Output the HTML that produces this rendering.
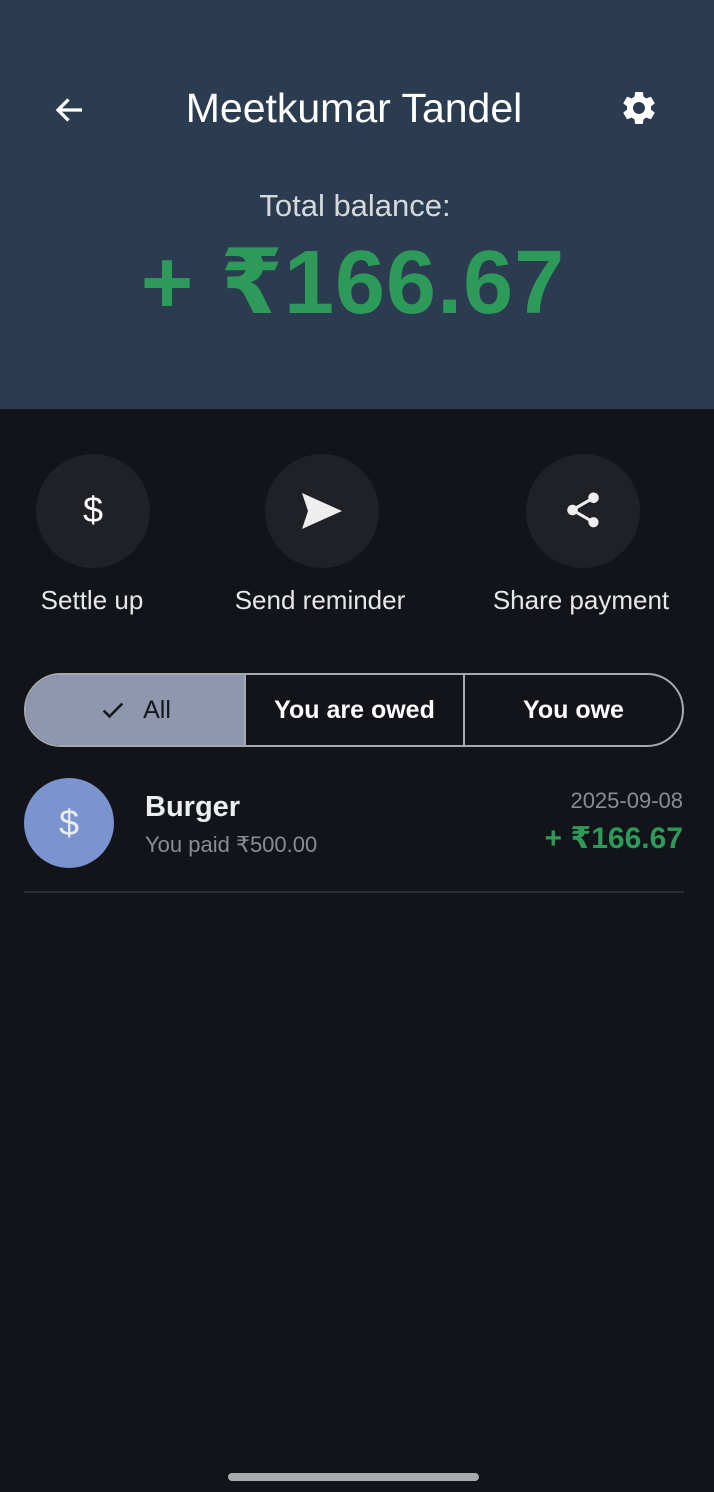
<!DOCTYPE html>
<html><head><meta charset="utf-8"><style>
*{margin:0;padding:0;box-sizing:border-box}
body{width:714px;height:1492px;background:#131419;font-family:"Liberation Sans","DejaVu Sans",sans-serif;color:#e6e7ea;position:relative;overflow:hidden}
.hdr{position:absolute;left:0;top:0;width:714px;height:409px;background:#2c3c50}
.t{position:absolute;white-space:nowrap}
.circ{position:absolute;width:114px;height:114px;border-radius:50%;background:#1f2126;top:454px}
.seg{position:absolute;left:24px;top:673px;width:660px;height:74px;border:2px solid #a6a9b0;border-radius:37px;overflow:hidden;display:flex}
.seg div{height:100%;display:flex;align-items:center;justify-content:center;font-size:25px;font-weight:bold;color:#fff}
</style></head><body>
<div class="hdr"></div>
<svg class="t" style="left:52px;top:92px" width="36" height="36" viewBox="0 0 24 24"><path d="M20 12H5M11 5l-7 7 7 7" stroke="#fff" stroke-width="2.2" fill="none"/></svg>
<div class="t" style="left:0;width:708px;text-align:center;top:85px;font-size:41px;color:#fff">Meetkumar Tandel</div>
<svg class="t" style="left:619px;top:88px" width="40" height="40" viewBox="0 0 24 24"><path fill="#fff" d="M19.14 12.94c.04-.3.06-.61.06-.94 0-.32-.02-.64-.07-.94l2.03-1.580a.49.49 0 0 0 .12-.61l-1.920-3.32a.49.49 0 0 0-.59-.22l-2.39.96c-.5-.38-1.03-.7-1.62-.94l-.36-2.54a.48.48 0 0 0-.48-.41h-3.84c-.24 0-.43.17-.47.41l-.36 2.54c-.59.24-1.13.57-1.62.94l-2.39-.96a.48.48 0 0 0-.59.22L2.74 8.87c-.12.21-.08.47.12.61l2.03 1.58c-.05.3-.09.63-.09.94s.02.64.07.94l-2.03 1.58a.49.49 0 0 0-.12.61l1.92 3.32c.12.22.37.29.59.22l2.39-.96c.5.38 1.03.7 1.62.94l.36 2.54c.05.24.24.41.48.41h3.84c.24 0 .44-.17.47-.41l.36-2.54c.59-.24 1.130-.56 1.62-.94l2.39.96c.22.08.47 0 .59-.22l1.92-3.32c.12-.22.07-.47-.12-.61l-2.010-1.58zM12 15.6c-1.98 0-3.6-1.62-3.6-3.6s1.62-3.6 3.6-3.6 3.6 1.62 3.6 3.6-1.62 3.6-3.6 3.6z"/></svg>
<div class="t" style="left:0;width:710px;text-align:center;top:188px;font-size:31px;color:#d5d9de">Total balance:</div>
<div class="t" style="left:0;width:706px;text-align:center;top:230px;font-size:90px;font-weight:bold;color:#2e9a5a;letter-spacing:1px">+ ₹166.67</div>

<div class="circ" style="left:36px"></div>
<div class="circ" style="left:265px"></div>
<div class="circ" style="left:526px"></div>
<div class="t" style="left:36px;width:114px;text-align:center;top:489px;font-size:36px;color:#fff">$</div>
<svg class="t" style="left:300px;top:491px" width="44" height="40" viewBox="0 0 22 20"><path d="M1 1l20 9-20 9 3-9z M4 10h8" fill="#eee"/></svg>
<svg class="t" style="left:562px;top:489px" width="42" height="42" viewBox="0 0 24 24"><path fill="#eee" d="M18 16.08c-.76 0-1.44.3-1.96.77L8.91 12.7c.05-.23.09-.46.09-.7s-.04-.47-.09-.7l7.05-4.11A2.99 2.99 0 0 0 21 5a3 3 0 1 0-5.91.7L8.04 9.81A3 3 0 1 0 6 15c.79 0 1.5-.31 2.040-.81l7.12 4.16c-.05.21-.08.43-.08.65A2.92 2.92 0 1 0 18 16.08z"/></svg>
<div class="t" style="left:0;width:184px;text-align:center;top:585px;font-size:26px">Settle up</div>
<div class="t" style="left:200px;width:240px;text-align:center;top:585px;font-size:26px">Send reminder</div>
<div class="t" style="left:470px;width:222px;text-align:center;top:585px;font-size:26px">Share payment</div>

<div class="seg">
<div style="width:220px;background:#8e97ae;color:#15171c;font-weight:normal;border-right:2px solid #a6a9b0"><svg width="28" height="28" viewBox="0 0 24 24" style="margin-right:16px"><path d="M4 12.5l5 5L20 6.5" stroke="#15171c" stroke-width="2.2" fill="none"/></svg>All</div>
<div style="width:219px;border-right:2px solid #a6a9b0">You are owed</div>
<div style="flex:1">You owe</div>
</div>

<div class="t" style="left:24px;top:778px;width:90px;height:90px;border-radius:50%;background:#7b93cf;color:#e8ecf6;font-size:36px;text-align:center;line-height:90px">$</div>
<div class="t" style="left:145px;top:791px;font-size:29px;font-weight:bold;color:#eceef2">Burger</div>
<div class="t" style="left:145px;top:832px;font-size:22px;color:#8a8c92">You paid ₹500.00</div>
<div class="t" style="right:31px;top:788px;font-size:22px;color:#8a8c92">2025-09-08</div>
<div class="t" style="right:31px;top:821px;font-size:30px;font-weight:bold;color:#2e9a5a">+ ₹166.67</div>
<div class="t" style="left:24px;top:891px;width:660px;height:2px;background:#2a2c31"></div>

<div class="t" style="left:228px;top:1473px;width:251px;height:8px;border-radius:4px;background:#a9aaae"></div>
</body></html>
